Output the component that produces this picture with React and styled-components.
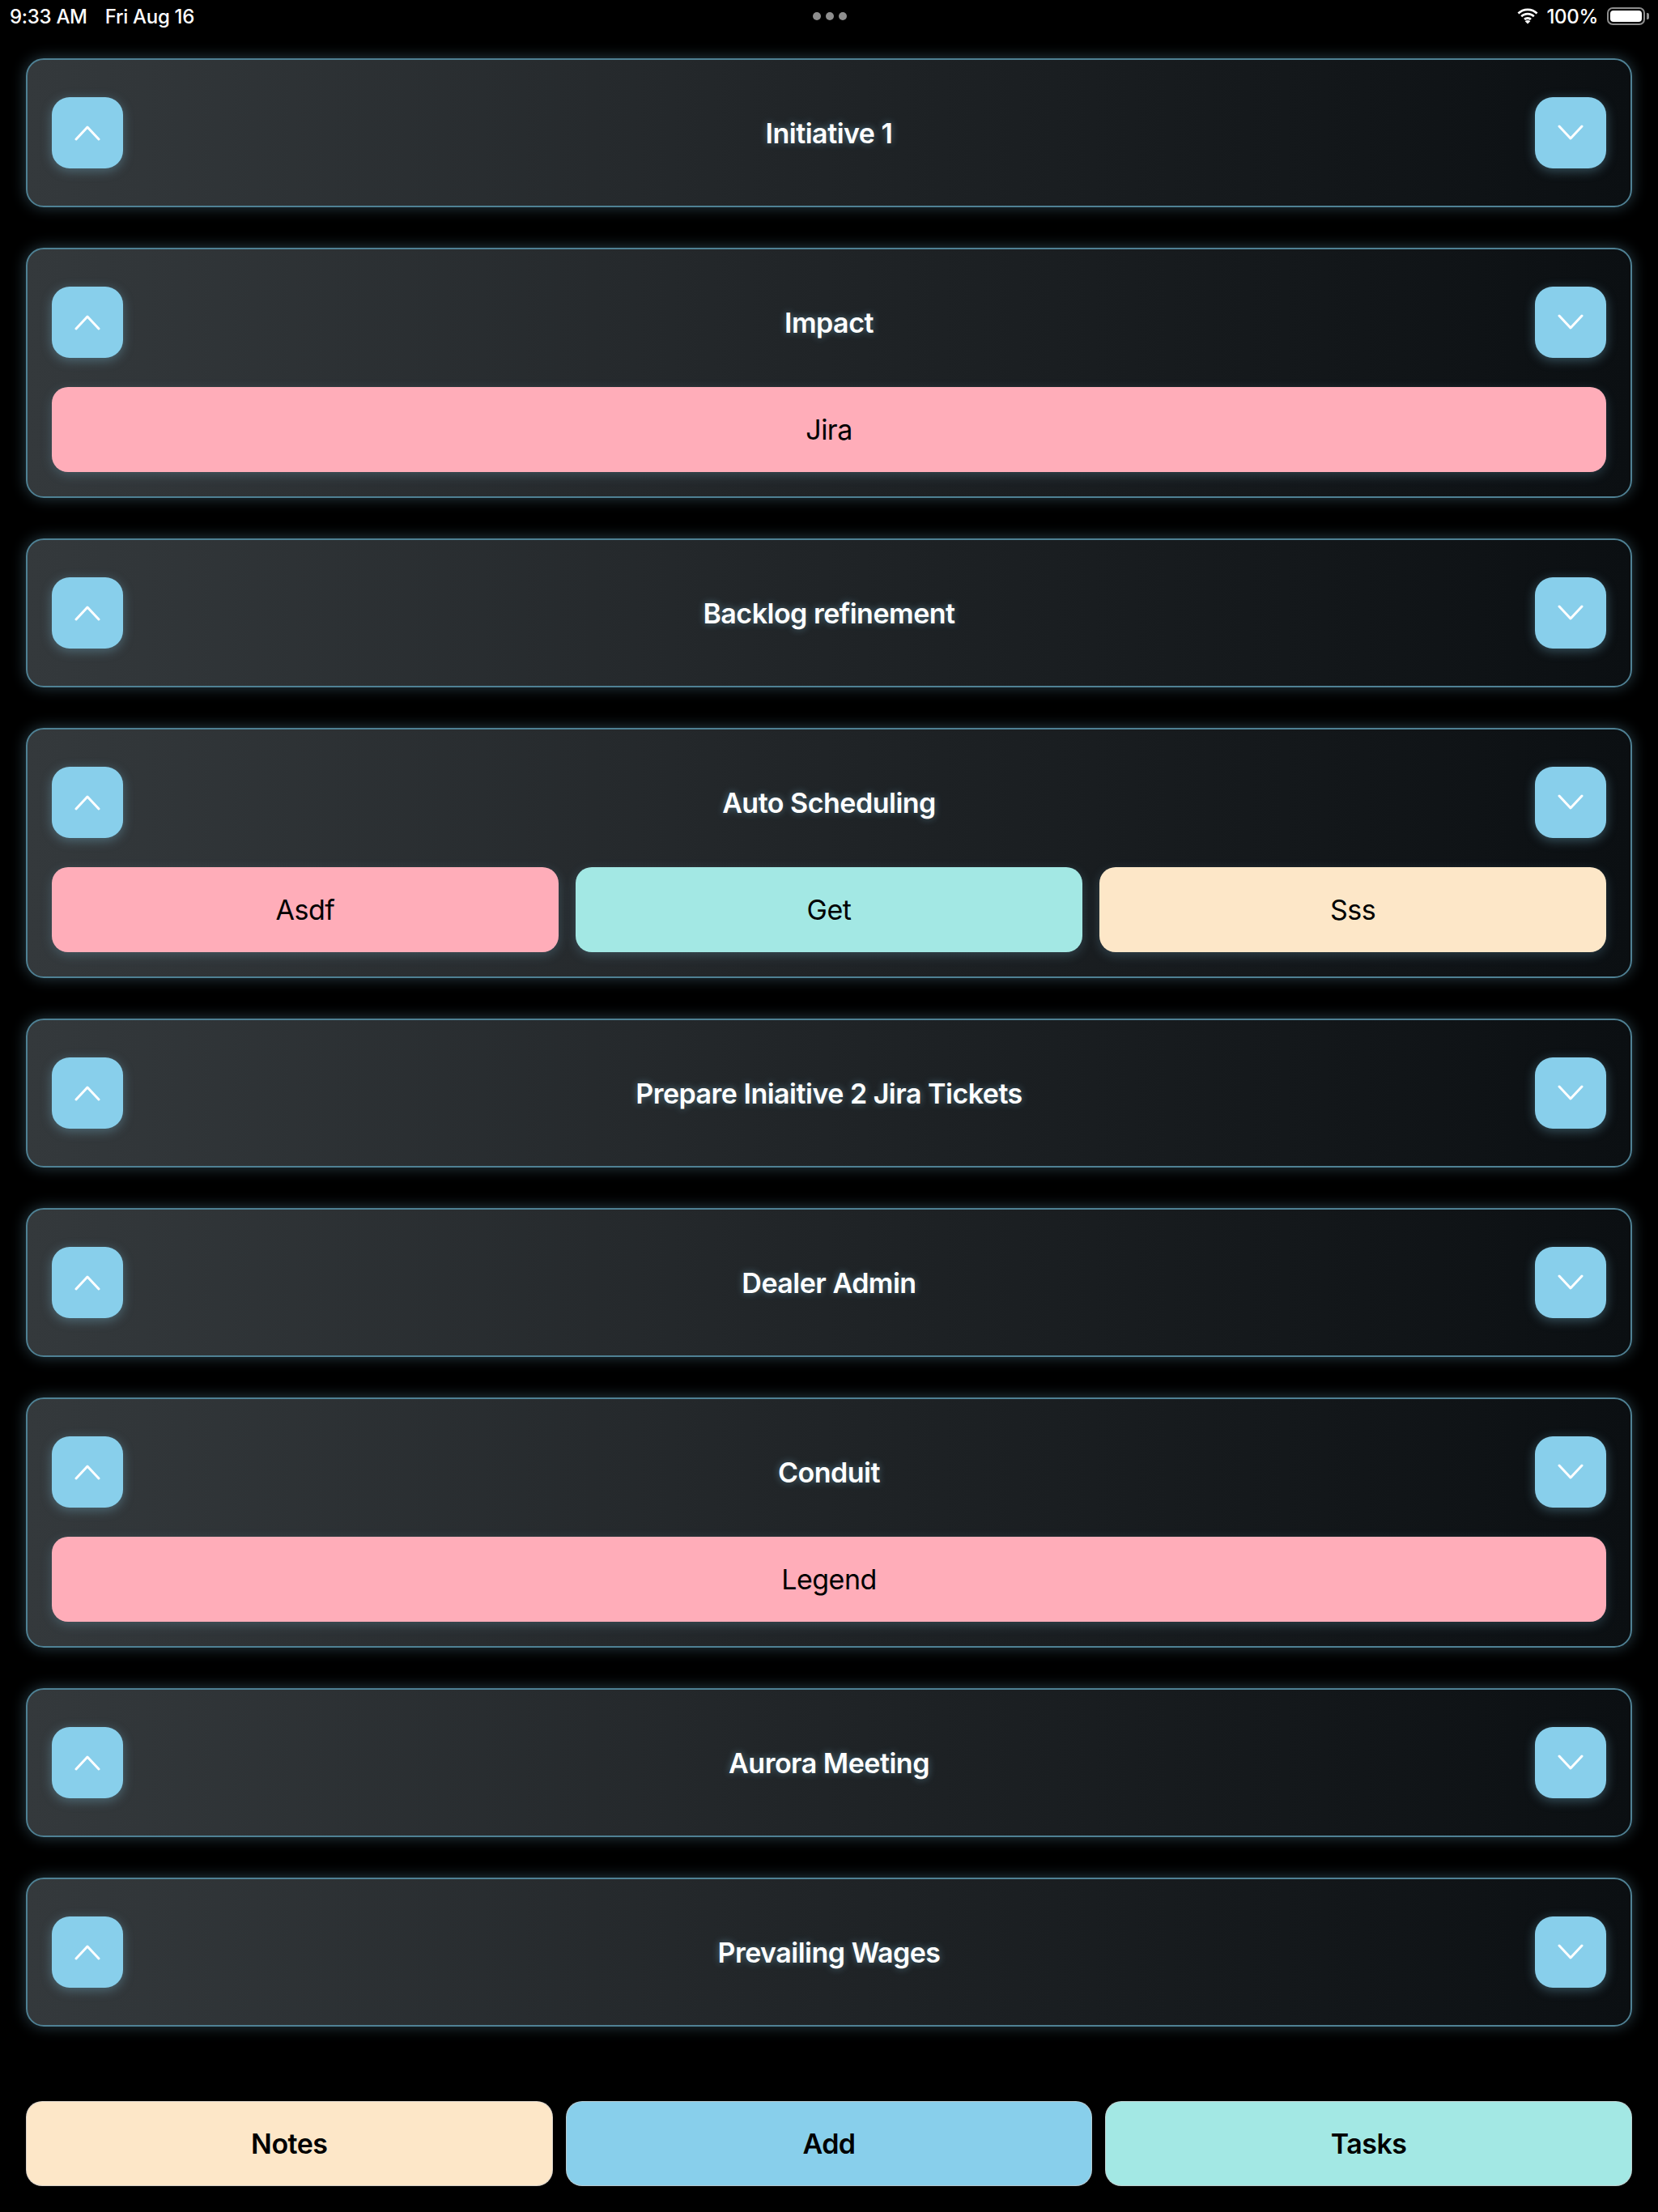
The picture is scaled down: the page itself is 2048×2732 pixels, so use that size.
import React from "react";
import styled, { createGlobalStyle } from "styled-components";

const GlobalStyle = createGlobalStyle`
  html, body {
    margin: 0;
    padding: 0;
    background: #000;
  }
  body {
    font-family: Inter, "Noto Sans", "Liberation Sans", sans-serif;
    -webkit-font-smoothing: antialiased;
  }
  * { box-sizing: border-box; }
`;

const Page = styled.div`
  width: 2048px;
  min-height: 2732px;
  background: #000;
  display: flex;
  flex-direction: column;
`;

const StatusBar = styled.div`
  height: 40px;
  display: grid;
  grid-template-columns: 1fr auto 1fr;
  align-items: center;
  padding: 0 11px 0 12px;
  color: #fff;
  font-size: 24px;
  font-weight: 500;
  letter-spacing: -0.3px;
`;

const StatusLeft = styled.div`
  display: flex;
  gap: 22px;
  align-items: center;
`;

const StatusRight = styled.div`
  display: flex;
  justify-content: flex-end;
  align-items: center;
  gap: 10px;
`;

const Dots = styled.div`
  display: flex;
  gap: 6px;
`;

const Dot = styled.span`
  width: 10px;
  height: 10px;
  border-radius: 50%;
  background: #8e8e8e;
`;

const Battery = styled.div`
  display: flex;
  align-items: center;
  gap: 2px;
  margin-left: 1px;
`;

const BatteryBody = styled.div`
  width: 47px;
  height: 22px;
  border: 2px solid #8d8d8d;
  border-radius: 7px;
  padding: 2px;
  display: flex;
`;

const BatteryFill = styled.div`
  flex: 1;
  background: #fff;
  border-radius: 4px;
`;

const BatteryNub = styled.div`
  width: 3px;
  height: 8px;
  border-radius: 0 2px 2px 0;
  background: #8d8d8d;
`;

const List = styled.div`
  display: flex;
  flex-direction: column;
  gap: 50px;
  padding: 32px 32px 0;
`;

const Card = styled.div`
  border: 2px solid #4f8194;
  border-radius: 22px;
  padding: 30px;
  background: linear-gradient(90deg, #34393c 0%, #222629 45%, #0b0f12 100%);
  box-shadow: 0 0 18px rgba(135, 206, 235, 0.3);
`;

const Header = styled.div`
  height: 120px;
  display: grid;
  grid-template-columns: 88px 1fr 88px;
  align-items: center;
`;

const Title = styled.div`
  text-align: center;
  color: #fff;
  font-size: 34px;
  font-weight: 600;
  letter-spacing: -0.5px;
  text-shadow: 0 0 10px rgba(135, 206, 235, 0.45);
`;

const ArrowButton = styled.button`
  width: 88px;
  height: 88px;
  border: none;
  border-radius: 22px;
  background: #88cfeb;
  box-shadow: 0 3px 14px rgba(135, 206, 235, 0.35);
  display: flex;
  align-items: center;
  justify-content: center;
  padding: 0;
  cursor: pointer;
`;

const ChipRow = styled.div`
  margin-top: 20px;
  display: grid;
  grid-template-columns: repeat(${(p) => p.$count}, 1fr);
  gap: 21px;
`;

const Chip = styled.div`
  height: 105px;
  border-radius: 20px;
  background: ${(p) => p.$color};
  box-shadow: 0 4px 14px rgba(135, 206, 235, 0.22);
  display: flex;
  align-items: center;
  justify-content: center;
  color: #000;
  font-size: 34px;
  font-weight: 400;
  letter-spacing: -0.5px;
`;

const Footer = styled.div`
  margin-top: 92px;
  padding: 0 32px;
  display: grid;
  grid-template-columns: repeat(3, 1fr);
  gap: 16px;
`;

const FooterButton = styled.button`
  height: 105px;
  border: 1px solid rgba(200, 200, 200, 0.7);
  border-radius: 20px;
  background: ${(p) => p.$color};
  color: #000;
  font-family: inherit;
  font-size: 34px;
  font-weight: 600;
  letter-spacing: -0.5px;
  cursor: pointer;
`;

const COLORS = {
  pink: "#ffadb9",
  teal: "#a3e8e4",
  cream: "#fde7c8",
  sky: "#88cfeb",
};

const Chevron = ({ up }) => (
  <svg width="32" height="20" viewBox="0 0 32 20" fill="none">
    <polyline
      points={up ? "2,18 16,3 30,18" : "2,2 16,17 30,2"}
      stroke="#fff"
      strokeWidth="3"
      strokeLinecap="round"
      strokeLinejoin="round"
    />
  </svg>
);

const Wifi = () => (
  <svg width="26" height="20" viewBox="0 0 26 20">
    <path d="M13 3.2c4.1 0 7.8 1.6 10.6 4.2l1.9-2C22.2 2.3 17.8.4 13 .4S3.8 2.3.5 5.4l1.9 2C5.2 4.8 8.9 3.2 13 3.2z" fill="#fff" />
    <path d="M13 8.6c2.6 0 5 1 6.8 2.7l1.9-2C19.4 7.2 16.4 5.8 13 5.8s-6.4 1.4-8.7 3.5l1.9 2c1.8-1.7 4.2-2.7 6.8-2.7z" fill="#fff" />
    <path d="M13 14c1.1 0 2.1.4 2.9 1.1l2-2.1c-1.3-1.2-3-1.900-4.9-1.9s-3.6.7-4.9 1.9l2 2.1c.8-.7 1.8-1.1 2.9-1.1z" fill="#fff" />
    <path d="M13 19.6l3.3-3.4c-.9-.8-2-1.2-3.3-1.2s-2.4.4-3.3 1.2z" fill="#fff" />
  </svg>
);

const items = [
  { title: "Initiative 1", chips: [] },
  { title: "Impact", chips: [{ label: "Jira", color: COLORS.pink }] },
  { title: "Backlog refinement", chips: [] },
  {
    title: "Auto Scheduling",
    chips: [
      { label: "Asdf", color: COLORS.pink },
      { label: "Get", color: COLORS.teal },
      { label: "Sss", color: COLORS.cream },
    ],
  },
  { title: "Prepare Iniaitive 2 Jira Tickets", chips: [] },
  { title: "Dealer Admin", chips: [] },
  { title: "Conduit", chips: [{ label: "Legend", color: COLORS.pink }] },
  { title: "Aurora Meeting", chips: [] },
  { title: "Prevailing Wages", chips: [] },
];

export default function App() {
  return (
    <>
      <GlobalStyle />
      <Page>
        <StatusBar>
          <StatusLeft>
            <span>9:33 AM</span>
            <span>Fri Aug 16</span>
          </StatusLeft>
          <Dots>
            <Dot />
            <Dot />
            <Dot />
          </Dots>
          <StatusRight>
            <Wifi />
            <span>100%</span>
            <Battery>
              <BatteryBody>
                <BatteryFill />
              </BatteryBody>
              <BatteryNub />
            </Battery>
          </StatusRight>
        </StatusBar>
        <List>
          {items.map((item) => (
            <Card key={item.title}>
              <Header>
                <ArrowButton aria-label="Move up">
                  <Chevron up />
                </ArrowButton>
                <Title>{item.title}</Title>
                <ArrowButton aria-label="Move down">
                  <Chevron />
                </ArrowButton>
              </Header>
              {item.chips.length > 0 && (
                <ChipRow $count={item.chips.length}>
                  {item.chips.map((c) => (
                    <Chip key={c.label} $color={c.color}>
                      {c.label}
                    </Chip>
                  ))}
                </ChipRow>
              )}
            </Card>
          ))}
        </List>
        <Footer>
          <FooterButton $color={COLORS.cream}>Notes</FooterButton>
          <FooterButton $color={COLORS.sky}>Add</FooterButton>
          <FooterButton $color={COLORS.teal}>Tasks</FooterButton>
        </Footer>
      </Page>
    </>
  );
}
